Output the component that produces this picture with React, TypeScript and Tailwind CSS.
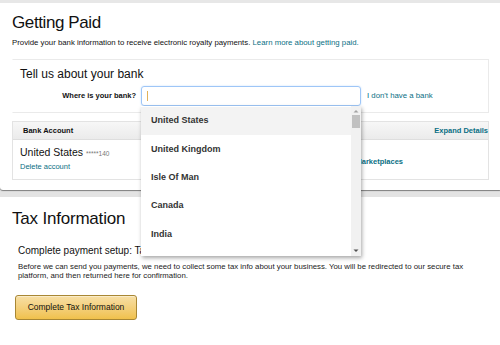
const COUNTRIES = ["United States", "United Kingdom", "Isle Of Man", "Canada", "India"];

function CountryDropdown() {
  return (
    <div className="absolute left-[141px] top-[106px] w-[220px] h-[150px] bg-white shadow-[1px_2px_4px_rgba(0,0,0,0.35)] flex overflow-hidden">
      <ul className="flex-1 pt-px">
        {COUNTRIES.map((c, i) => (
          <li
            key={c}
            className={`h-[28.3px] flex items-center pl-[10px] text-[9px] font-bold text-[#333] ${i === 0 ? "bg-[#f3f3f3]" : ""}`}
          >
            {c}
          </li>
        ))}
      </ul>
      {/* scrollbar */}
      <div className="w-[10px] bg-[#f1f1f1] flex flex-col items-center">
        <svg width="6" height="8" viewBox="0 0 6 8" className="mt-px">
          <path d="M0.5 5.5 L3 3 L5.5 5.5 Z" fill="#a3a3a3" />
        </svg>
        <div className="w-[8px] h-[13px] bg-[#c1c1c1]" />
        <div className="flex-1" />
        <svg width="6" height="8" viewBox="0 0 6 8" className="mb-px">
          <path d="M0.5 2.5 L3 5 L5.5 2.5 Z" fill="#505050" />
        </svg>
      </div>
    </div>
  );
}

export default function App() {
  return (
    <div
      className="relative w-[500px] h-[345px] overflow-hidden bg-[#e3e3e3] text-[#111]"
      style={{ fontFamily: '"Liberation Sans", Arial, sans-serif' }}
    >
      <div className="h-[3px] bg-[#e7e7e7]" />

      {/* Getting Paid card */}
      <section className="h-[187px] bg-white rounded-bl-[3px] shadow-[0_1px_1px_rgba(0,0,0,0.45)] px-3 pt-[10px]">
        <h1 className="text-[17px] leading-[20px] font-normal tracking-[-0.4px]">Getting Paid</h1>
        <p className="mt-[4.5px] text-[7.8px] leading-[10px] text-[#111]">
          Provide your bank information to receive electronic royalty payments.{" "}
          <span className="text-[#0a6f84]">Learn more about getting paid.</span>
        </p>

        {/* Bank box */}
        <div className="mt-[11.5px] w-[477px] h-[54px] border border-[#eaeaea] border-l-transparent">
          <h2 className="pl-[7px] pt-[6.5px] text-[12px] leading-[14px]">Tell us about your bank</h2>
          <div className="mt-[5px] flex items-center">
            <label className="w-[123px] text-right text-[7.5px] font-bold">Where is your bank?</label>
            <div className="ml-[5px] w-[220px] h-[20px] rounded-[3px] border border-[#9ec6f7] shadow-[0_0_2px_#c7defb] flex items-center pl-[5px]">
              <span className="w-px h-[10px] bg-[#e2b25a]" />
            </div>
            <a className="ml-[6px] text-[7.8px] text-[#0a6f84]">I don't have a bank</a>
          </div>
        </div>

        {/* Bank account table */}
        <div className="mt-[8px] w-[477px] h-[59px] border border-[#e3e3e3]">
          <div className="h-[18px] bg-gradient-to-b from-[#f7f7f7] to-[#ebebeb] border-b border-[#dedede] flex items-center justify-between pl-[10px] text-[7.5px] font-bold">
            <span>Bank Account</span>
            <span className="text-[#0a6f84]">Expand Details</span>
          </div>
          <div className="flex pl-[7px] pt-[6px]">
            <div className="w-[300px]">
              <div className="text-[10.5px] leading-[12px]">
                United States <span className="text-[6.5px] text-[#777]">*****140</span>
              </div>
              <div className="mt-[2px] text-[7.5px] leading-[10px] text-[#0a6f84]">Delete account</div>
            </div>
            <div className="w-[83px] pt-[10px] text-right text-[7.5px] font-bold text-[#0a6f84]">View Marketplaces</div>
          </div>
        </div>
      </section>

      {/* Tax Information */}
      <section className="mt-[7px] h-[160px] bg-white px-3 pt-[12px]">
        <h1 className="text-[17px] leading-[20px] font-normal tracking-[-0.2px]">Tax Information</h1>
        <div className="pl-[6px]">
          <h3 className="mt-[16px] text-[10px] leading-[12px]">Complete payment setup: Tax information missing</h3>
          <p className="mt-[4.5px] text-[7.8px] leading-[9.5px] text-[#222]">
            Before we can send you payments, we need to collect some tax info about your business. You will be redirected to our secure tax
            <br />
            platform, and then returned here for confirmation.
          </p>
        </div>
        <button className="mt-[14.5px] ml-[3px] w-[122px] h-[25px] rounded-[3px] border border-[#a88734] bg-gradient-to-b from-[#f7dfa5] to-[#f0c14b] text-[8.5px] text-[#111] shadow-[inset_0_1px_0_rgba(255,255,255,0.4)]">
          Complete Tax Information
        </button>
      </section>

      <CountryDropdown />
    </div>
  );
}
